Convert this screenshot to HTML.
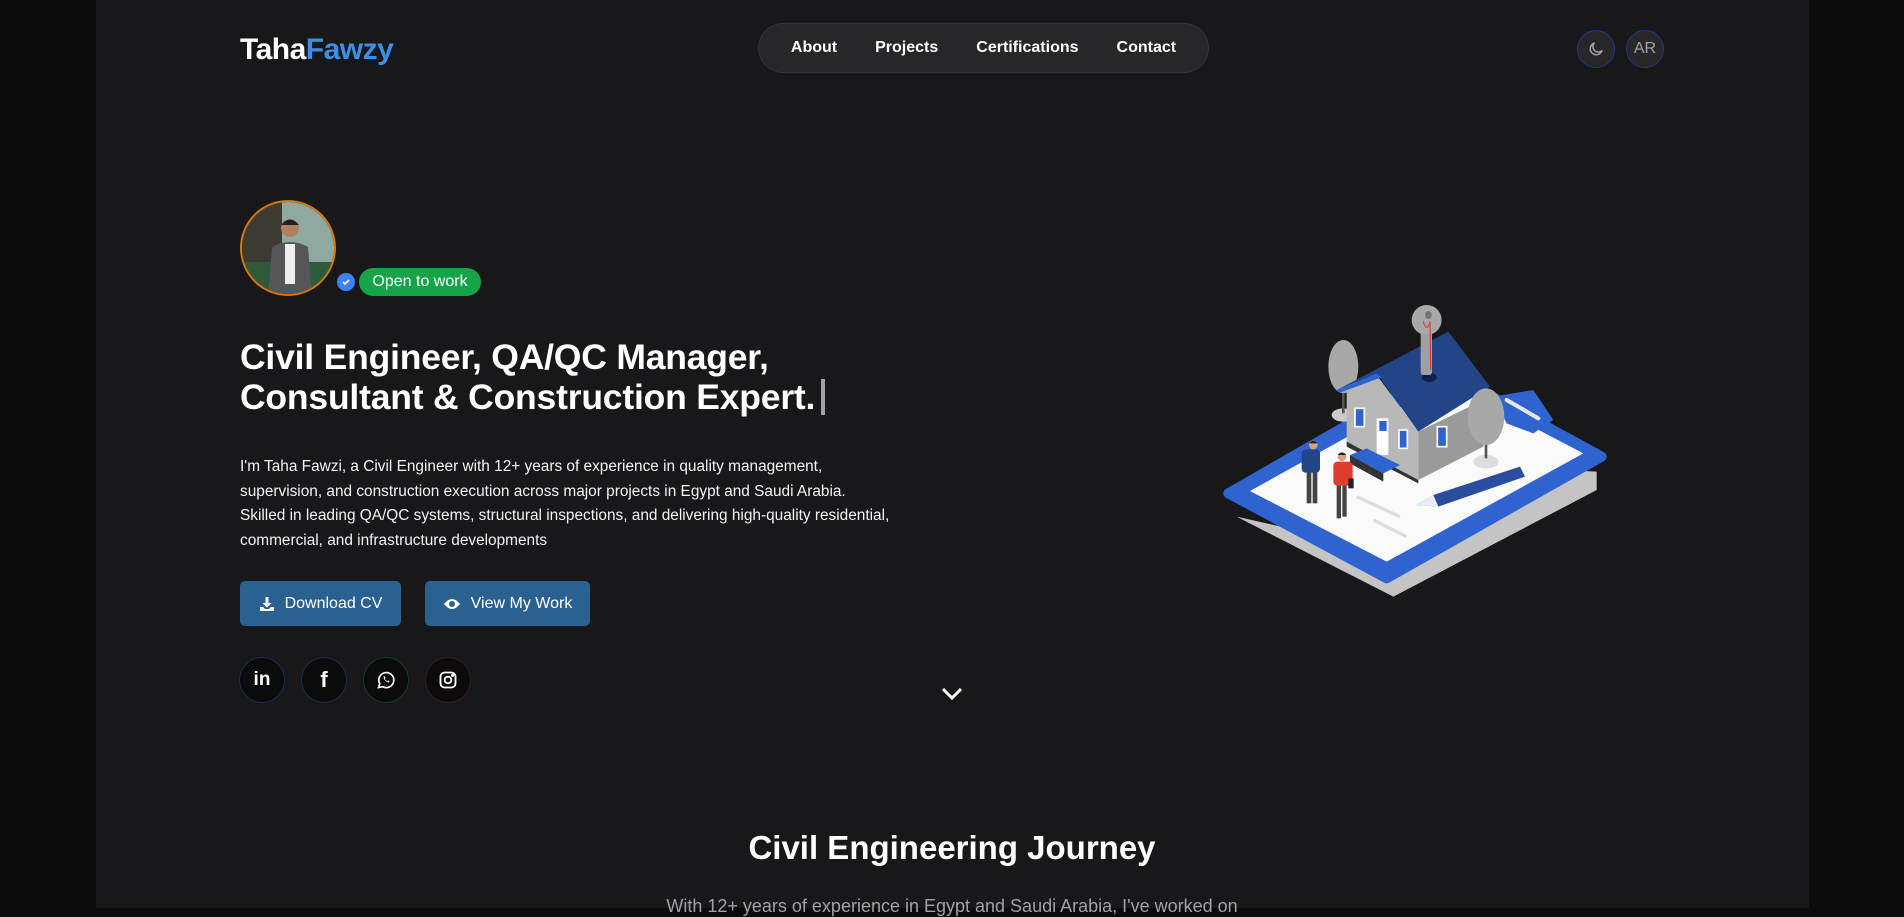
<!DOCTYPE html>
<html><head><meta charset="utf-8"><style>
*{margin:0;padding:0;box-sizing:border-box}
html,body{width:1904px;height:908px;overflow:hidden;background:#0b0b0b;font-family:"Liberation Sans",sans-serif;color:#fff}
.page{position:absolute;left:96px;top:0;width:1713px;height:908px;background:#18181b}
.abs{position:absolute}
.logo{left:240px;top:33px;font-size:30px;font-weight:bold;letter-spacing:-0.5px}
.logo span{color:#3b8fe6}
.nav{left:758px;top:23px;width:451px;height:50px;border-radius:25px;background:#27272a;border:1px solid #333;display:flex;align-items:center;justify-content:center;gap:38px;font-weight:bold;font-size:16px}
.circ{width:38px;height:38px;border-radius:50%;border:1.5px solid #1e3a8a;background:#27272a;top:30px;display:flex;align-items:center;justify-content:center;color:#a1a1aa;font-size:16px}
.avatar{left:240px;top:200px;width:96px;height:96px;border-radius:50%;border:2px solid #d97706;overflow:hidden;background:#4a5a50}
.badge{left:359px;top:268px;width:122px;height:28px;border-radius:14px;background:#16a34a;font-size:16px;display:flex;align-items:center;justify-content:center}
h1{position:absolute;left:240px;top:337px;font-size:35.5px;line-height:40px;font-weight:bold;letter-spacing:-0.2px}
.cur{display:inline-block;width:4px;height:36px;background:#a1a1aa;vertical-align:-6px;margin-left:6px}
.para{left:240px;top:455px;white-space:nowrap;font-size:15.4px;line-height:24.5px;color:#f4f4f5}
.btn{top:581px;height:45px;border-radius:5px;background:#2a6190;display:flex;align-items:center;justify-content:center;gap:10px;font-size:16px}
.soc{top:657px;width:46px;height:46px;border-radius:50%;background:#0b0b0c;display:flex;align-items:center;justify-content:center}
</style></head><body>
<div class="page"></div>
<div class="abs logo">Taha<span>Fawzy</span></div>
<div class="abs nav"><span>About</span><span>Projects</span><span>Certifications</span><span>Contact</span></div>
<div class="abs circ" style="left:1577px"><svg width="18" height="18" viewBox="0 0 24 24" fill="none" stroke="#a1a1aa" stroke-width="2"><path d="M20 14A8 8 0 1 1 10 4a6 6 0 0 0 10 10z"/></svg></div>
<div class="abs circ" style="left:1626px">AR</div>

<div class="abs avatar"><svg width="96" height="96" viewBox="0 0 96 96"><rect width="96" height="96" fill="#3d3a33"/><rect x="40" y="0" width="56" height="60" fill="#8fa8a0"/><rect x="0" y="60" width="96" height="36" fill="#2f5a3a"/><path d="M26 96 L30 45 Q48 35 66 45 L70 96Z" fill="#55565a"/><rect x="43" y="42" width="10" height="40" fill="#eee"/><circle cx="48" cy="26" r="9" fill="#b08060"/><path d="M39 23 Q48 12 57 23" fill="#222"/></svg></div>
<div class="abs" style="left:337px;top:273px;width:18px;height:18px;border-radius:50%;background:#3b82f6;display:flex;align-items:center;justify-content:center"><svg width="10" height="10" viewBox="0 0 10 10"><path d="M2 5l2 2 4-4" stroke="#fff" stroke-width="1.6" fill="none"/></svg></div>
<div class="abs badge">Open to work</div>

<h1>Civil Engineer, QA/QC Manager,<br>Consultant &amp; Construction Expert.<span class="cur"></span></h1>
<div class="abs para">I'm Taha Fawzi, a Civil Engineer with 12+ years of experience in quality management,<br>supervision, and construction execution across major projects in Egypt and Saudi Arabia.<br>Skilled in leading QA/QC systems, structural inspections, and delivering high-quality residential,<br>commercial, and infrastructure developments</div>

<div class="abs btn" style="left:240px;width:161px"><svg width="16" height="16" viewBox="0 0 16 16" fill="#fff"><path d="M6.5 1h3v6h3L8 11.5 3.5 7h3z"/><path d="M1 11h3l2 2h4l2-2h3v4H1z"/></svg>Download CV</div>
<div class="abs btn" style="left:425px;width:165px"><svg width="18" height="14" viewBox="0 0 18 14"><path d="M1 7Q9-3 17 7Q9 17 1 7z" fill="#fff"/><circle cx="9" cy="7" r="3" fill="#2a6190"/></svg>View My Work</div>

<div class="abs soc" style="left:239px;border:1px solid #1e2a4a"><span style="font-weight:bold;font-size:19px">in</span></div>
<div class="abs soc" style="left:301px;border:1px solid #1e2a4a"><span style="font-weight:bold;font-size:22px">f</span></div>
<div class="abs soc" style="left:363px;border:1px solid #163a22"><svg width="20" height="20" viewBox="0 0 24 24" fill="none" stroke="#fff" stroke-width="2"><path d="M3 21l1.5-4.5A9 9 0 1 1 8 20z"/><path d="M9 8q0 5 6 7l1.5-1.5-2-1-1 1q-2-1-3-3l1-1-1-2z" fill="#fff" stroke="none"/></svg></div>
<div class="abs soc" style="left:425px;border:1px solid #3a1a2a"><svg width="20" height="20" viewBox="0 0 24 24" fill="none" stroke="#fff" stroke-width="2.2"><rect x="3" y="3" width="18" height="18" rx="5"/><circle cx="12" cy="12" r="4"/><circle cx="17.5" cy="6.5" r="0.8" fill="#fff"/></svg></div>

<svg class="abs" style="left:940px;top:686px" width="24" height="16" viewBox="0 0 24 16"><path d="M3 3l9 9 9-9" stroke="#fff" stroke-width="3" fill="none"/></svg>

<svg class="abs" style="left:1200px;top:290px" width="420" height="320" viewBox="0 0 1260 960">
<polygon points="110,680 580,920 1190,600 1190,545 1100,540 600,790" fill="#c4c4c4"/>
<polygon points="85,610 560,865 1205,500 730,240" fill="#2f63d0" stroke="#2f63d0" stroke-width="30" stroke-linejoin="round"/>
<polygon points="150,603 560,815 1150,490 740,275" fill="#fafafa"/>
<polygon points="880,320 1000,300 1060,390 1000,430 920,400" fill="#2f63d0"/>
<line x1="920" y1="330" x2="1015" y2="385" stroke="#e6e6e6" stroke-width="12" stroke-linecap="round"/>
<line x1="470" y1="620" x2="600" y2="680" stroke="#ddd" stroke-width="10"/>
<line x1="520" y1="690" x2="620" y2="740" stroke="#ddd" stroke-width="10"/>
<ellipse cx="430" cy="375" rx="35" ry="20" fill="#ccc"/><rect x="426" y="280" width="8" height="90" fill="#555"/>
<ellipse cx="430" cy="230" rx="45" ry="80" fill="#a8a8a8"/>
<polygon points="440,300 440,460 655,570 655,425 530,255" fill="#b8b8b8"/>
<polygon points="655,425 655,570 850,470 850,330" fill="#9a9a9a"/>
<polygon points="440,455 655,570 655,580 440,470" fill="#333"/>
<polygon points="410,300 530,250 655,425 870,290 745,125" fill="#234587"/>
<polygon points="410,300 530,250 545,262 420,308" fill="#2f63d0"/>
<rect x="465" y="355" width="28" height="55" fill="#2f63d0" stroke="#fff" stroke-width="5"/>
<rect x="530" y="385" width="35" height="110" fill="#fff"/><rect x="538" y="393" width="22" height="30" fill="#2f63d0"/>
<rect x="597" y="420" width="25" height="55" fill="#2f63d0" stroke="#fff" stroke-width="5"/>
<rect x="712" y="410" width="28" height="60" fill="#2f63d0" stroke="#fff" stroke-width="5"/>
<polygon points="450,495 500,475 600,525 550,550" fill="#2f63d0"/><polygon points="450,495 550,550 550,575 450,520" fill="#333"/>
<ellipse cx="688" cy="262" rx="22" ry="14" fill="#10204a"/>
<rect x="662" y="120" width="34" height="135" rx="8" fill="#a0a0a0"/>
<ellipse cx="680" cy="90" rx="45" ry="45" fill="#a8a8a8"/><ellipse cx="685" cy="75" rx="10" ry="12" fill="#777"/>
<path d="M670 95 Q680 130 690 95 L692 240" stroke="#e03030" stroke-width="3" fill="none"/>
<ellipse cx="858" cy="515" rx="38" ry="20" fill="#ddd"/><rect x="854" y="420" width="8" height="85" fill="#555"/>
<ellipse cx="858" cy="380" rx="55" ry="85" fill="#a8a8a8"/>
<polygon points="650,645 700,615 960,530 975,560 715,650" fill="#2a4da0"/>
<polygon points="650,645 700,615 715,650" fill="#e8eef8"/>
<rect x="320" y="540" width="14" height="100" fill="#444"/><rect x="338" y="540" width="14" height="100" fill="#444"/><rect x="305" y="478" width="55" height="70" rx="12" fill="#234587"/><circle cx="340" cy="465" r="13" fill="#d8a080"/><path d="M327 460 Q340 445 353 460" fill="#222"/>
<rect x="410" y="580" width="13" height="105" fill="#444"/><rect x="427" y="580" width="13" height="100" fill="#444"/><rect x="400" y="515" width="58" height="72" rx="12" fill="#e03c30"/><circle cx="426" cy="500" r="13" fill="#d8a080"/><path d="M413 495 Q426 480 439 495" fill="#222"/>
<rect x="445" y="565" width="16" height="30" fill="#222"/>
</svg>

<div class="abs" style="left:0;width:1904px;top:829px;text-align:center;font-size:33px;font-weight:bold">Civil Engineering Journey</div>
<div class="abs" style="left:0;width:1904px;top:896px;text-align:center;font-size:18px;color:#a1a1aa">With 12+ years of experience in Egypt and Saudi Arabia, I've worked on</div>
</body></html>
